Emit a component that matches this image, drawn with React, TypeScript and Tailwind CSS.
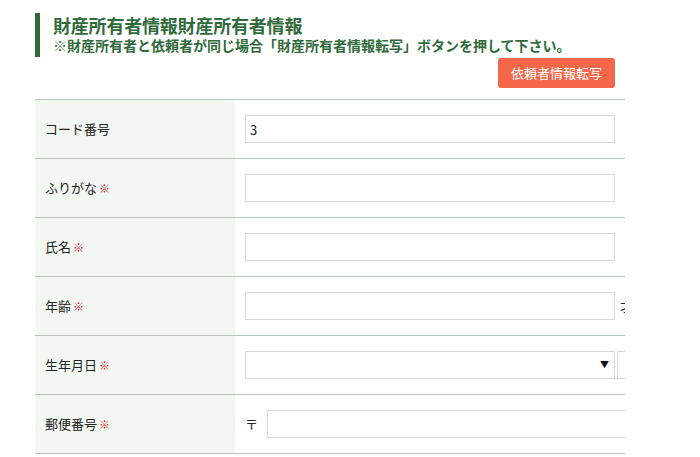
import React from 'react';

const font = { fontFamily: '"Noto Sans CJK JP", "Noto Sans", sans-serif' };

function Req() {
  return <span className="ml-[2px] text-[11px] text-[#c8262b]">※</span>;
}

function Row({ label, required, children }: { label: string; required?: boolean; children: React.ReactNode }) {
  return (
    <div className="grid grid-cols-[200px_1fr] border-b border-[#b9c4b9]">
      <div className="flex h-[58px] items-center bg-[#f2f7f1] pl-[10px] text-[13px] text-[#222]">
        {label}
        {required && <Req />}
      </div>
      <div className="flex items-center gap-[5px] pl-[10px] whitespace-nowrap text-[13px] text-[#222]">
        {children}
      </div>
    </div>
  );
}

function TextBox({ value, className = 'w-[370px]' }: { value?: string; className?: string }) {
  return (
    <input
      readOnly
      value={value ?? ''}
      className={`h-[28px] shrink-0 border border-[#d9d9d9] bg-white px-[4px] text-[13px] text-[#222] outline-none ${className}`}
    />
  );
}

function SelectBox({ className }: { className: string }) {
  return (
    <div className={`relative h-[28px] shrink-0 border border-[#d9d9d9] bg-white ${className}`}>
      <select className="h-full w-full appearance-none bg-transparent text-[13px] outline-none">
        <option></option>
      </select>
      <span className="absolute right-[5px] top-[6px] text-[9px] text-[#111]">▼</span>
    </div>
  );
}

export default function App() {
  return (
    <div className="min-h-screen bg-white" style={font}>
      <div className="ml-[35px] w-[590px] overflow-hidden pt-[13px]">
        <div className="border-l-[5px] border-[#2f6b3a] pl-[13px]">
          <h1 className="text-[18px] leading-[24px] font-bold text-[#2f6b3a] tracking-[-0.2px]">財産所有者情報財産所有者情報</h1>
          <p className="pb-[3px] text-[14px] leading-[17px] font-bold text-[#2f6b3a]">
            ※財産所有者と依頼者が同じ場合「財産所有者情報転写」ボタンを押して下さい。
          </p>
        </div>
        <div className="flex justify-end pr-[10px] pt-[1px]">
          <button className="h-[30px] w-[117px] rounded-[3px] bg-[#f5674a] text-[13px] text-white">
            依頼者情報転写
          </button>
        </div>
        <div className="mt-[11px] border-t border-[#b9c4b9]">
          <Row label="コード番号">
            <TextBox value="3" />
          </Row>
          <Row label="ふりがな" required>
            <TextBox />
          </Row>
          <Row label="氏名" required>
            <TextBox />
          </Row>
          <Row label="年齢" required>
            <TextBox />
            <span>才</span>
          </Row>
          <Row label="生年月日" required>
            <SelectBox className="w-[370px]" />
            <SelectBox className="-ml-[3px] w-[80px]" />
          </Row>
          <Row label="郵便番号" required>
            <span className="pr-[4px]">〒</span>
            <TextBox className="w-[400px]" />
          </Row>
        </div>
      </div>
    </div>
  );
}
